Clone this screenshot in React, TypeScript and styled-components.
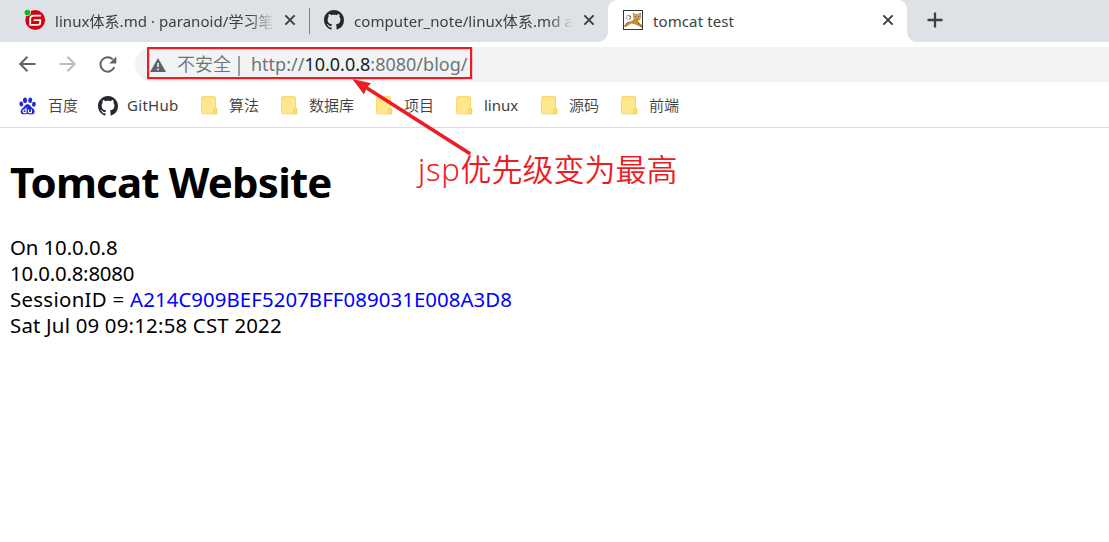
import React from 'react';
import styled, { createGlobalStyle } from 'styled-components';

const Global = createGlobalStyle`
  * { box-sizing: border-box; }
  body { margin: 0; background: #fff; }
`;

const Window = styled.div`
  position: relative;
  width: 1109px;
  height: 542px;
  overflow: hidden;
  background: #fff;
  color: #3c4043;
  font-family: 'Noto Sans', 'Noto Sans CJK SC', sans-serif;
  font-weight: 400;
  white-space: nowrap;
`;

const TabStrip = styled.div`
  display: flex;
  height: 42px;
  background: #dee1e6;
`;

const Tab = styled.div<{ $width: number; $pad: number; $active?: boolean }>`
  position: relative;
  display: flex;
  align-items: center;
  width: ${(p) => p.$width}px;
  height: 42px;
  padding: 0 13px 2px ${(p) => p.$pad}px;
  background: ${(p) => (p.$active ? '#fff' : 'transparent')};
  border-radius: 9px 9px 0 0;
  ${(p) =>
    p.$active &&
    `
    &::before, &::after {
      content: '';
      position: absolute;
      bottom: 0;
      width: 10px;
      height: 10px;
    }
    &::before { left: -10px; background: radial-gradient(circle at 0 0, transparent 9.5px, #fff 10.2px); }
    &::after { right: -10px; background: radial-gradient(circle at 100% 0, transparent 9.5px, #fff 10.2px); }
  `}
`;

const TabTitle = styled.span<{ $width: number; $spacing: number; $gap?: number; $fade?: boolean }>`
  width: ${(p) => p.$width}px;
  margin-left: ${(p) => p.$gap ?? 10}px;
  padding-top: 2px;
  overflow: hidden;
  font-size: 15px;
  line-height: 24px;
  letter-spacing: ${(p) => p.$spacing}px;
  ${(p) => p.$fade && 'mask-image: linear-gradient(90deg, #000 calc(100% - 24px), transparent);'}
`;

const CloseSlot = styled.span`
  display: flex;
  margin-left: auto;
`;

const Divider = styled.span`
  width: 1px;
  height: 26px;
  margin-top: 8px;
  background: #808387;
`;

const NewTab = styled.div`
  display: flex;
  align-items: center;
  padding: 0 0 2px 20px;
`;

const Toolbar = styled.div`
  display: flex;
  align-items: center;
  height: 45px;
  padding-left: 18px;
`;

const NavButton = styled.span`
  display: flex;
  width: 40px;
`;

const AddressBar = styled.div`
  display: flex;
  align-items: center;
  flex: 1;
  height: 35px;
  margin-left: -3px;
  padding-left: 15px;
  border-radius: 18px 0 0 18px;
  background: #f1f3f4;
  color: #6f7377;
  font-size: 18px;
  line-height: 26px;
`;

const Security = styled.span`
  width: 60px;
  margin-left: 11px;
  padding-bottom: 2px;
  font-weight: 350;
`;

const AddressDivider = styled.span`
  width: 2px;
  height: 20px;
  margin: 2px 0 0 1px;
  background: #9a9da1;
`;

const Url = styled.span`
  margin-left: 11px;
  padding-bottom: 2px;
  letter-spacing: 0;
  b { color: #202124; font-weight: inherit; }
`;

const Bookmarks = styled.div`
  display: flex;
  align-items: center;
  height: 41px;
  padding: 0 0 3px 18px;
  border-bottom: 1px solid #dadce0;
`;

const Bookmark = styled.div<{ $width: number; $spacing?: number }>`
  display: flex;
  align-items: center;
  width: ${(p) => p.$width}px;
  font-size: 15px;
  line-height: 24px;
  letter-spacing: ${(p) => p.$spacing ?? 0}px;
`;

const BookmarkIcon = styled.span<{ $width: number }>`
  display: flex;
  flex: none;
  width: ${(p) => p.$width}px;
`;

const BookmarkLabel = styled.span<{ $latin?: boolean }>`
  padding-bottom: 2px;
  font-weight: ${(p) => (p.$latin ? 400 : 350)};
`;

const Page = styled.main`
  padding: 26px 10px;
  color: #000;
  font-size: 20.8px;
`;

const Heading = styled.h1`
  margin: 0 0 24px;
  font-size: 42px;
  line-height: 56px;
  font-weight: 700;
  letter-spacing: -0.8px;
`;

const Line = styled.div<{ $spacing: number }>`
  line-height: 26px;
  font-size: 20.4px;
  letter-spacing: ${(p) => p.$spacing}px;
`;

const Session = styled.span<{ $spacing: number }>`
  color: #00f;
  letter-spacing: ${(p) => p.$spacing}px;
`;

const Overlay = styled.svg`
  position: absolute;
  inset: 0;
`;

const Note = styled.div`
  position: absolute;
  left: 418px;
  top: 146px;
  color: #ed1c24;
  font-size: 31px;
  font-weight: 350;
  line-height: 46px;
`;

const NoteLatin = styled.span`
  letter-spacing: 0.7px;
`;

const GiteeIcon = () => (
  <svg width="22" height="22" viewBox="0 0 22 22">
    <circle cx="11.2" cy="11" r="9.9" fill="#d9000f" />
    <path d="M17 6.6H10Q6.2 6.6 6.2 10V15.8H13.6Q16.2 15.8 16.2 13.4V11.2H9.6" fill="none" stroke="#fff" strokeWidth="1.8" />
    <circle cx="3.6" cy="3.6" r="3.3" fill="#dee1e6" />
    <circle cx="3.4" cy="3.5" r="2.8" fill="#0db61b" />
  </svg>
);

const GitHubIcon = () => (
  <svg width="20" height="20" viewBox="0 0 16 16" fill="#24292f">
    <path d="M8 0C3.58 0 0 3.58 0 8c0 3.54 2.29 6.53 5.47 7.59.4.07.55-.17.55-.38 0-.19-.01-.82-.01-1.49-2.01.37-2.53-.49-2.69-.94-.09-.23-.48-.94-.82-1.13-.28-.15-.68-.52-.01-.53.63-.01 1.08.58 1.23.82.72 1.21 1.87.87 2.33.66.07-.52.28-.87.51-1.07-1.78-.2-3.64-.89-3.64-3.95 0-.87.31-1.59.82-2.15-.08-.2-.36-1.02.08-2.12 0 0 .67-.21 2.2.82.64-.18 1.32-.27 2-.27s1.36.09 2 .27c1.53-1.04 2.2-.82 2.2-.82.44 1.1.16 1.92.08 2.12.51.56.82 1.27.82 2.15 0 3.07-1.87 3.75-3.65 3.95.29.25.54.73.54 1.48 0 1.07-.01 1.93-.01 2.2 0 .21.15.46.55.38A8.01 8.01 0 0 0 16 8c0-4.42-3.58-8-8-8z" />
  </svg>
);

const TomcatIcon = () => (
  <svg width="20" height="20" viewBox="0 0 20 20">
    <rect x=".5" y=".5" width="19" height="19" fill="#fff" stroke="#34363a" />
    <path d="M8.5 8Q7 4 4 5.5Q1.8 8 4.5 10.5" fill="#f4f4f4" stroke="#aaa" strokeWidth=".8" />
    <path d="M1 17L3.5 13.4L7.5 11.6L11 9.6L15 11.5L19 15.5V17.8L12.5 14.4L8.5 13.6L2.5 17Z" fill="#c98b2b" />
    <path d="M1 16.5L4 13L7 11.8M14.5 12L19 16.4" stroke="#6b5025" fill="none" strokeWidth=".8" />
    <path d="M10.3 3L12 4.5H15L17.7 3L17.3 8.8L14.5 11.4L11 10Z" fill="#dca94c" stroke="#8f6a30" strokeWidth=".6" />
    <path d="M12 6.5H13.2M15 6.5H16.2M13 9H15.5M5.5 5.6L8 6.8M6 9.3L8 8.3" stroke="#4b3b24" strokeWidth=".8" />
  </svg>
);

const CloseIcon = () => (
  <svg width="12" height="12" viewBox="0 0 12 12">
    <path d="M1.4 1.4L10.6 10.6M10.6 1.4L1.4 10.6" stroke="#3c4043" strokeWidth="2" />
  </svg>
);

const PlusIcon = () => (
  <svg width="16" height="16" viewBox="0 0 16 16">
    <path d="M8 .5V15.5M.5 8H15.5" stroke="#3c4043" strokeWidth="2.3" />
  </svg>
);

const ArrowIcon = ({ forward }: { forward?: boolean }) => (
  <svg width="20" height="18" viewBox="0 0 20 18">
    <path
      d={forward ? 'M1.5 8H16.5M9.5 .8L16.7 8L9.5 15.2' : 'M17.5 8H2.5M9.5 .8L2.3 8L9.5 15.2'}
      fill="none"
      stroke={forward ? '#babcbe' : '#5f6368'}
      strokeWidth="2"
    />
  </svg>
);

const ReloadIcon = () => (
  <svg width="20" height="18" viewBox="0 0 20 18">
    <path d="M16.3 11.2A7.2 7.2 0 1 1 14.8 3.4" fill="none" stroke="#5f6368" strokeWidth="2" />
    <path d="M18.3 .4V7.4H11.3Z" fill="#5f6368" />
  </svg>
);

const WarningIcon = () => (
  <svg width="16" height="14" viewBox="0 0 16 14">
    <path d="M8 0L16 14H0Z" fill="#5f6368" />
    <path d="M8 5V9M8 10.4V12.2" stroke="#f1f3f4" strokeWidth="1.6" />
  </svg>
);

const BaiduIcon = () => (
  <svg width="19" height="18" viewBox="0 0 19 18" fill="#2529d8">
    <ellipse cx="7" cy="3.2" rx="2" ry="2.8" />
    <ellipse cx="12.2" cy="3.2" rx="2" ry="2.8" transform="rotate(8 12.2 3.2)" />
    <ellipse cx="3.3" cy="7" rx="1.9" ry="2.5" transform="rotate(-12 3.3 7)" />
    <ellipse cx="15.9" cy="7.2" rx="1.9" ry="2.5" transform="rotate(8 15.9 7.2)" />
    <path d="M9.5 7.3C7 7.3 6.6 9.8 4.5 11.2C2.2 12.8 1.8 17 5 17.3C7 17.5 8 17 9.5 17S12.5 17.6 14.5 17.3C17.5 16.8 17.3 13 14.8 11.3C12.6 9.8 12 7.3 9.5 7.3Z" />
    <path d="M8 10.8V15.6H6.5Q5 15.6 5 14.2T6.5 12.8H8M10.4 12.4V14.4Q10.4 15.6 11.7 15.6H13.4V12.4" fill="none" stroke="#fff" strokeWidth="1.1" />
  </svg>
);

const FolderIcon = () => (
  <svg width="17" height="19" viewBox="0 0 17 19">
    <path d="M1.8 .6H13.2Q14.5 .6 14.5 1.8V11.5L15.8 12.8V16.8Q15.8 17.8 14.8 17.8H1.8Q.6 17.8 .6 16.6V1.8Q.6 .6 1.8 .6Z" fill="#ffe68f" stroke="#fbd760" />
    <path d="M12.7 17.8V13.2L14 11.9L15.6 13.2V17.8Z" fill="#ffe07a" stroke="#f3ca4d" strokeWidth=".8" />
  </svg>
);

const folders = [
  { label: '算法', width: 80 },
  { label: '数据库', width: 95 },
  { label: '项目', width: 80 },
  { label: 'linux', width: 85, latin: true },
  { label: '源码', width: 80 },
  { label: '前端', width: 80 },
];

export default function App() {
  return (
    <Window>
      <Global />
      <TabStrip>
        <Tab $width={309} $pad={24}>
          <GiteeIcon />
          <TabTitle $width={219} $spacing={0.05} $gap={9} $fade>linux体系.md · paranoid/学习笔</TabTitle>
          <CloseSlot><CloseIcon /></CloseSlot>
        </Tab>
        <Divider />
        <Tab $width={298} $pad={14}>
          <GitHubIcon />
          <TabTitle $width={219} $spacing={0.07} $fade>computer_note/linux体系.md a</TabTitle>
          <CloseSlot><CloseIcon /></CloseSlot>
        </Tab>
        <Tab $width={299} $pad={15} $active>
          <TomcatIcon />
          <TabTitle $width={200} $spacing={0.1}>tomcat test</TabTitle>
          <CloseSlot><CloseIcon /></CloseSlot>
        </Tab>
        <NewTab><PlusIcon /></NewTab>
      </TabStrip>
      <Toolbar>
        <NavButton><ArrowIcon /></NavButton>
        <NavButton><ArrowIcon forward /></NavButton>
        <NavButton><ReloadIcon /></NavButton>
        <AddressBar>
          <WarningIcon />
          <Security>不安全</Security>
          <AddressDivider />
          <Url>http://<b>10.0.0.8</b>:8080/blog/</Url>
        </AddressBar>
      </Toolbar>
      <Bookmarks>
        <Bookmark $width={80}>
          <BookmarkIcon $width={30}><BaiduIcon /></BookmarkIcon>
          <BookmarkLabel>百度</BookmarkLabel>
        </Bookmark>
        <Bookmark $width={103} $spacing={0.3}>
          <BookmarkIcon $width={29}><GitHubIcon /></BookmarkIcon>
          <BookmarkLabel $latin>GitHub</BookmarkLabel>
        </Bookmark>
        {folders.map((f) => (
          <Bookmark key={f.label} $width={f.width}>
            <BookmarkIcon $width={28}><FolderIcon /></BookmarkIcon>
            <BookmarkLabel $latin={f.latin}>{f.label}</BookmarkLabel>
          </Bookmark>
        ))}
      </Bookmarks>
      <Page>
        <Heading>Tomcat Website</Heading>
        <Line $spacing={-0.1}>On 10.0.0.8</Line>
        <Line $spacing={-0.2}>10.0.0.8:8080</Line>
        <Line $spacing={0.3}>SessionID = <Session $spacing={0.07}>A214C909BEF5207BFF089031E008A3D8</Session></Line>
        <Line $spacing={0.2}>Sat Jul 09 09:12:58 CST 2022</Line>
      </Page>
      <Overlay width="1109" height="542" viewBox="0 0 1109 542">
        <rect x="148.1" y="48.1" width="323" height="30" fill="none" stroke="#ed1c24" strokeWidth="2.2" />
        <path d="M469 153L366 87.5" stroke="#ed1c24" strokeWidth="3.6" strokeLinecap="round" />
        <path d="M352.3 79L371 83.3L366.8 87.8L364 94.5Z" fill="#ed1c24" />
      </Overlay>
      <Note><NoteLatin>jsp</NoteLatin>优先级变为最高</Note>
    </Window>
  );
}
